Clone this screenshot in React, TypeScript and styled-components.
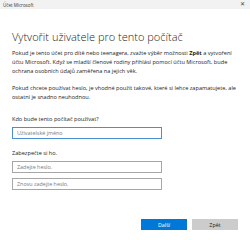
import React from "react";
import styled, { createGlobalStyle } from "styled-components";

const Global = createGlobalStyle`
  html, body { margin: 0; padding: 0; background: #ffffff; }
  body { font-family: "Open Sans", "Noto Sans", sans-serif; color: #1a1a1a; }
  * { box-sizing: border-box; }
`;

const Window = styled.div`
  width: 250px;
  height: 240px;
  display: flex;
  flex-direction: column;
  background: #ffffff;
  overflow: hidden;
`;

const TitleBar = styled.div`
  height: 9px;
  flex: none;
  background: #f2f2f2;
  display: flex;
  align-items: center;
  justify-content: space-between;
  padding: 0 5px 0 3px;
  font-size: 4.5px;
  color: #333;
`;

const Close = styled.span`
  font-size: 5.5px;
  line-height: 1;
  color: #444;
`;

const Content = styled.div`
  flex: 1;
  display: flex;
  flex-direction: column;
  padding: 21px 12px 10px 12px;
`;

const Heading = styled.h1`
  margin: 0 0 6px 0;
  font-size: 11px;
  line-height: 13px;
  font-weight: 300;
  color: #222;
`;

const Para = styled.div<{ $gap?: number }>`
  margin: 0 0 ${(p) => p.$gap ?? 9}px 0;
  display: flex;
  flex-direction: column;
  font-size: 5.6px;
  line-height: 8.8px;
  color: #222;
`;

const Line = styled.span`
  display: block;
  white-space: nowrap;
`;

const Label = styled.div`
  font-size: 5.6px;
  line-height: 8px;
  margin-bottom: 4px;
  color: #222;
`;

const Input = styled.input<{ $focused?: boolean }>`
  display: block;
  width: 150px;
  height: 12px;
  border: 1px solid ${(p) => (p.$focused ? "#4a8fd4" : "#a6a6a6")};
  padding: 0 0 0 4px;
  margin: 0 0 ${(p) => (p.$focused ? 10 : 5)}px 0;
  font-family: inherit;
  font-size: 5.4px;
  color: #333;
  outline: none;
  background: #fff;
  &::placeholder { color: #7a7a7a; }
`;

const Footer = styled.div`
  margin-top: auto;
  display: flex;
  justify-content: flex-end;
  gap: 5px;
`;

const Button = styled.button<{ $primary?: boolean }>`
  width: 46px;
  height: 11px;
  border: none;
  padding: 0;
  font-family: inherit;
  font-size: 5.4px;
  background: ${(p) => (p.$primary ? "#0078d7" : "#cccccc")};
  color: ${(p) => (p.$primary ? "#ffffff" : "#1a1a1a")};
`;

export default function App() {
  return (
    <>
      <Global />
      <Window>
        <TitleBar>
          <span>Účet Microsoft</span>
          <Close>✕</Close>
        </TitleBar>
        <Content>
          <Heading>Vytvořit uživatele pro tento počítač</Heading>
          <Para>
            <Line>
              Pokud je tento účet pro dítě nebo teenagera, zvažte výběr možnosti <b>Zpět</b> a vytvoření
            </Line>
            <Line>účtu Microsoft. Když se mladší členové rodiny přihlásí pomocí účtu Microsoft, bude</Line>
            <Line>ochrana osobních údajů zaměřena na jejich věk.</Line>
          </Para>
          <Para $gap={13}>
            <Line>Pokud chcete používat heslo, je vhodné použít takové, které si lehce zapamatujete, ale</Line>
            <Line>ostatní je snadno neuhodnou.</Line>
          </Para>
          <Label>Kdo bude tento počítač používat?</Label>
          <Input $focused placeholder="Uživatelské jméno" />
          <Label>Zabezpečte si ho.</Label>
          <Input type="password" placeholder="Zadejte heslo." />
          <Input type="password" placeholder="Znovu zadejte heslo." />
          <Footer>
            <Button $primary>Další</Button>
            <Button>Zpět</Button>
          </Footer>
        </Content>
      </Window>
    </>
  );
}
